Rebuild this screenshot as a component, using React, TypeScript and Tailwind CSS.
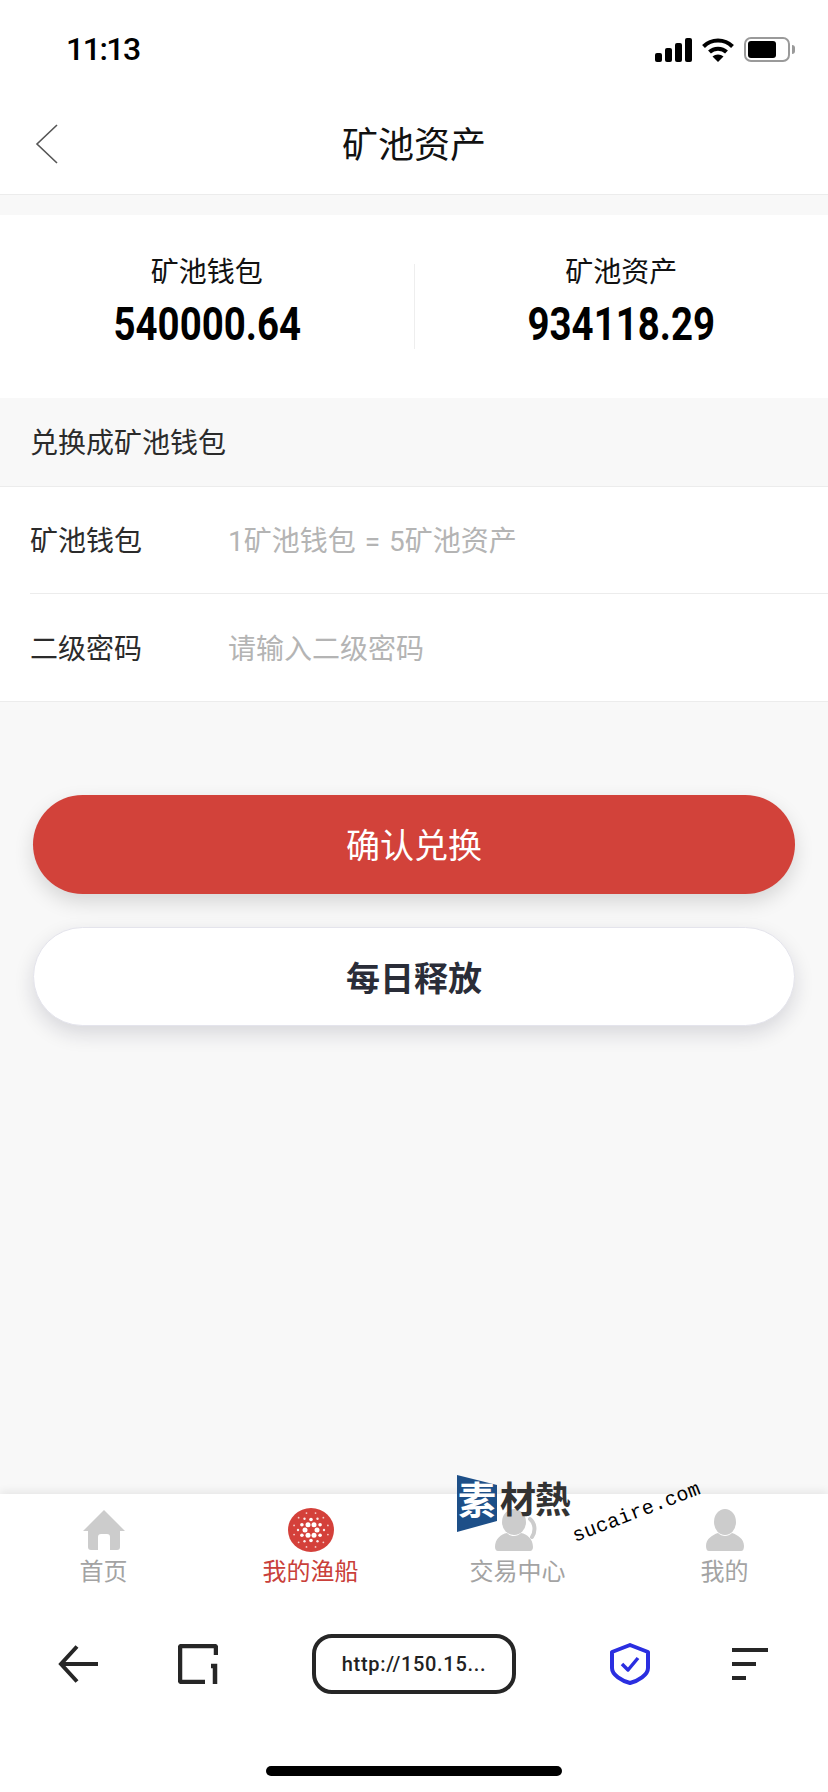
const FONT = "font-['Roboto','Noto_Sans_CJK_SC',sans-serif]";

function ringDots(count: number, radius: number, offset: number) {
  return Array.from({ length: count }, (_, i) => {
    const a = ((i * 360) / count + offset) * (Math.PI / 180);
    return { x: 23 + radius * Math.cos(a), y: 22 + radius * Math.sin(a) };
  });
}

function StatusIcons() {
  return (
    <div className="flex items-end gap-[10px]">
      <svg width="37" height="24" viewBox="0 0 37 24" fill="#000">
        <rect x="0" y="15" width="7" height="9" rx="2" />
        <rect x="10" y="10" width="7" height="14" rx="2" />
        <rect x="20" y="5" width="7" height="19" rx="2" />
        <rect x="30" y="0" width="7" height="24" rx="2" />
      </svg>
      <svg width="32" height="24" viewBox="0 0 32 24" fill="none" stroke="#000" strokeWidth="4">
        <path d="M1.5 8.5C9.5 0.5 22.5 0.5 30.5 8.5" />
        <path d="M7.5 14C12 9.5 20 9.5 24.5 14" />
        <path d="M16 24L10.5 18.5C13.5 15.8 18.5 15.8 21.5 18.5Z" fill="#000" stroke="none" />
      </svg>
      <div className="flex items-center gap-[2px]">
        <div className="w-[46px] h-[25px] rounded-[7px] border-2 border-[#9a9a9a] p-[2px] flex">
          <div className="w-[28px] h-full rounded-[3px] bg-black" />
        </div>
        <div className="w-[3px] h-[9px] rounded-r-full bg-[#9a9a9a]" />
      </div>
    </div>
  );
}

function Tab({ label, active, children }: { label: string; active?: boolean; children: React.ReactNode }) {
  return (
    <div className="flex-1 flex flex-col items-center">
      <div className="h-[48px] flex items-center justify-center">{children}</div>
      <span className={`mt-[2px] text-[24px] leading-[32px] ${active ? 'text-[#c9403a]' : 'text-[#a3a3a3]'}`}>{label}</span>
    </div>
  );
}

function Row({ label, hint, inset }: { label: string; hint: string; inset?: boolean }) {
  return (
    <div className={`h-[107px] flex items-center ml-[30px] pt-[4px] ${inset ? 'border-b border-[#ececec]' : ''}`}>
      <span className="w-[198px] text-[28px] text-[#2b2b2b]">{label}</span>
      <span className="text-[28px] text-[#b4b4b4] [word-spacing:2px]">{hint}</span>
    </div>
  );
}

export default function App() {
  return (
    <div className={`${FONT} relative w-[828px] h-[1792px] bg-[#f8f8f8] flex flex-col overflow-hidden`}>
      <div className="h-[96px] bg-white flex items-start justify-between pl-[66px] pr-[33px] pt-[31px]">
        <span className="text-[32px] leading-[36px] font-medium tracking-[-1.5px] text-black">11:13</span>
        <div className="pt-[6px]">
          <StatusIcons />
        </div>
      </div>

      <div className="relative h-[99px] bg-white border-b border-[#ececec] flex items-center justify-center">
        <svg className="absolute left-[35px] top-[28px]" width="24" height="40" viewBox="0 0 24 40" fill="none" stroke="#555" strokeWidth="1.6">
          <path d="M22 1L2 20L22 39" />
        </svg>
        <span className="text-[36px] text-[#111] mt-[2px]">矿池资产</span>
      </div>

      <div className="mt-[20px] h-[183px] bg-white flex items-center">
        <div className="flex-1 flex flex-col items-center -mt-[10px]">
          <span className="text-[28px] leading-[40px] text-[#111]">矿池钱包</span>
          <span className="text-[46px] leading-[52px] mt-[5px] font-bold text-black scale-x-[0.835]">540000.64</span>
        </div>
        <div className="w-px h-[85px] bg-[#eeeeee]" />
        <div className="flex-1 flex flex-col items-center -mt-[10px]">
          <span className="text-[28px] leading-[40px] text-[#111]">矿池资产</span>
          <span className="text-[46px] leading-[52px] mt-[5px] font-bold text-black scale-x-[0.835]">934118.29</span>
        </div>
      </div>

      <div className="h-[89px] px-[30px] pt-[4px] flex items-center border-b border-[#ececec]">
        <span className="text-[28px] text-[#2b2b2b]">兑换成矿池钱包</span>
      </div>

      <div className="bg-white border-b border-[#ececec]">
        <Row label="矿池钱包" hint="1矿池钱包 = 5矿池资产" inset />
        <Row label="二级密码" hint="请输入二级密码" />
      </div>

      <div className="px-[33px] mt-[93px] flex flex-col gap-[33px]">
        <div className="h-[99px] rounded-full bg-[#d2423a] flex items-center justify-center pt-[3px] text-[34px] text-white shadow-[0_8px_20px_rgba(0,0,0,0.14)]">
          确认兑换
        </div>
        <div className="h-[99px] rounded-full bg-white border border-[#e4e4ec] flex items-center justify-center pt-[5px] text-[34px] font-bold text-[#2a2d38] shadow-[0_8px_20px_rgba(20,20,50,0.14)]">
          每日释放
        </div>
      </div>

      <div className="mt-auto h-[298px] bg-white shadow-[0_-3px_8px_rgba(0,0,0,0.07)] flex flex-col">
        <div className="flex pt-[12px]">
          <Tab label="首页">
            <svg width="42" height="40" viewBox="0 0 42 40" fill="#cccccc">
              <path d="M21 0L42 21H37V37C37 38.7 36 40 34 40H27V27C27 25 26 24 24 24H18C16 24 15 25 15 27V40H8C6 40 5 38.7 5 37V21H0Z" />
            </svg>
          </Tab>
          <Tab label="我的渔船" active>
            <svg width="46" height="44" viewBox="0 0 46 44">
              <ellipse cx="23" cy="22" rx="23" ry="22" fill="#d4403a" />
              {ringDots(6, 6, 0).map((d, i) => <circle key={i} cx={d.x} cy={d.y} r="2.5" fill="#fff" />)}
              {ringDots(6, 10.5, 30).map((d, i) => <circle key={i} cx={d.x} cy={d.y} r="1.8" fill="#fff" />)}
              {ringDots(6, 13, 0).map((d, i) => <circle key={i} cx={d.x} cy={d.y} r="1.2" fill="#fff" opacity="0.9" />)}
              {ringDots(12, 17.5, 15).map((d, i) => <circle key={i} cx={d.x} cy={d.y} r="0.9" fill="#fff" opacity="0.75" />)}
            </svg>
          </Tab>
          <Tab label="交易中心">
            <svg width="46" height="42" viewBox="0 0 46 42" fill="#cccccc">
              <ellipse cx="19" cy="13" rx="12" ry="13" />
              <path d="M0 38C0 30 6 25 12 24C16 28 22 28 26 24C32 25 38 30 38 38C38 40 37 42 35 42H3C1 42 0 40 0 38Z" />
              <path d="M35 10C40 14 41 22 37 28" fill="none" stroke="#cccccc" strokeWidth="4" strokeLinecap="round" />
            </svg>
          </Tab>
          <Tab label="我的">
            <svg width="38" height="42" viewBox="0 0 38 42" fill="#cccccc">
              <ellipse cx="19" cy="13" rx="11" ry="13" />
              <path d="M0 37C0 30 6 26 12 24C16 28 22 28 26 24C32 26 38 30 38 37C38 40 37 42 35 42H3C1 42 0 40 0 37Z" />
            </svg>
          </Tab>
        </div>

        <div className="mt-[46px] h-[60px] flex items-center pl-[58px]">
          <svg width="40" height="38" viewBox="0 0 40 38" fill="none" stroke="#262626" strokeWidth="4">
            <path d="M19 1.5L3 19L19 36.5" />
            <path d="M3 19H40" />
          </svg>
          <svg className="ml-[80px]" width="40" height="40" viewBox="0 0 40 40" fill="none" stroke="#262626" strokeWidth="4.5">
            <path d="M27 38H4C2.8 38 2 37.2 2 36V4C2 2.8 2.8 2 4 2H36C37.2 2 38 2.8 38 4V11" />
            <path d="M33 22H37V40" />
          </svg>
          <div className="ml-[94px] w-[204px] h-[60px] rounded-[20px] border-4 border-[#262626] flex items-center justify-center text-[20px] font-medium tracking-[0.7px] text-[#222]">
            http://150.15...
          </div>
          <svg className="ml-[94px]" width="40" height="42" viewBox="0 0 40 42" fill="none" stroke="#2a2ee0" strokeWidth="4" strokeLinejoin="round">
            <path d="M20 2L38 9V25C38 32 28 38 20 40C12 38 2 32 2 25V9Z" />
            <path d="M12 21L18 27L28 15" strokeWidth="3.5" />
          </svg>
          <svg className="ml-[82px]" width="36" height="32" viewBox="0 0 36 32" fill="#262626">
            <rect x="0" y="0" width="36" height="4" />
            <rect x="0" y="14" width="24" height="4" />
            <rect x="0" y="28" width="14" height="4" />
          </svg>
        </div>

        <div className="mt-auto mb-[16px] mx-auto w-[296px] h-[10px] rounded-full bg-black" />
      </div>

      <div className="absolute left-[457px] top-[1475px] w-[250px] h-[70px]">
        <svg className="absolute left-0 top-0" width="40" height="57" viewBox="0 0 40 57" fill="#1d4f88">
          <path d="M0 0L40 10V46L0 57Z" />
        </svg>
        <span className="absolute left-[1px] top-[3px] text-[38px] leading-[46px] font-bold text-white">素</span>
        <span className="absolute left-[43px] top-[3px] text-[36px] leading-[46px] font-bold text-[#333] tracking-[-1px]">材熱</span>
        <span className="absolute left-[112px] top-[26px] font-['Liberation_Mono',monospace] text-[20px] leading-[24px] tracking-[0.3px] text-black -rotate-[21deg] whitespace-nowrap">sucaire.com</span>
      </div>
    </div>
  );
}
